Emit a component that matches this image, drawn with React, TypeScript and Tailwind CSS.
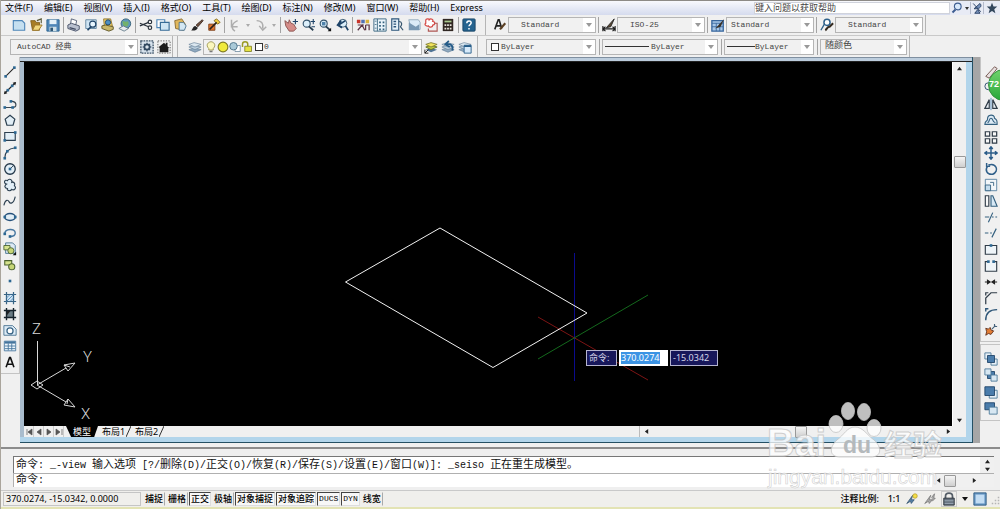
import type { ReactNode } from "react";
import { clsx } from "clsx";

type Tool = { label: string; art: ReactNode };

const NAVY = "#1f4468";
const BLUE = "#4f86b8";
const PALE = "#cfe4f3";
const GOLD = "#d9b13b";
const RED = "#c8352c";

const Glyph = ({ children, className }: { children: ReactNode; className?: string }) => (
  <svg viewBox="0 0 16 16" className={clsx("shrink-0", className ?? "size-3.5")} fill="none">
    {children}
  </svg>
);

const ToolButton = ({ tool }: { tool: Tool }) => (
  <button aria-label={tool.label} className="flex h-4 w-[17px] shrink-0 items-center justify-center">
    <Glyph>{tool.art}</Glyph>
  </button>
);

const Divider = () => (
  <div className="flex h-4 w-1 shrink-0 justify-center">
    <span className="w-px bg-[#a3a3a3]" />
  </div>
);

const Sheets = () => (
  <>
    <path d="M1 11l6-2 8 2-7 3z" fill="#8fa9bf" stroke="#5d7a93" strokeWidth=".7" />
    <path d="M1 8l6-2 8 2-7 3z" fill="#b9cddd" stroke="#5d7a93" strokeWidth=".7" />
    <path d="M1 5l6-2 8 2-7 3z" fill="#dbe7f0" stroke="#5d7a93" strokeWidth=".7" />
  </>
);

const fileTools: Tool[] = [
  { label: "新建", art: <path d="M1.5 3h10l3 3v8h-13z" fill="#c5dff0" stroke={BLUE} strokeWidth="1.3" /> },
  {
    label: "打开",
    art: (
      <>
        <path d="M2 3h5l1 2h4v9H4z" fill="#a87d25" stroke="#80601d" />
        <path d="M4 14l3-6h8l-4 6z" fill="#f1d77c" stroke="#9a762a" />
        <path d="M9 3l5-2v5" stroke="#5a5a3a" strokeWidth="1.3" />
      </>
    ),
  },
  {
    label: "保存",
    art: (
      <>
        <path d="M1 2h14v13H1z" fill={BLUE} stroke="#2b638f" />
        <path d="M4 2h8v5H4z" fill="#e3f0f8" />
        <path d="M4 10h8v5H4z" fill="#cfe0e8" />
        <path d="M5 11h3v4H5z" fill="#2b5576" />
      </>
    ),
  },
];

const printTools: Tool[] = [
  {
    label: "打印",
    art: (
      <>
        <path d="M5 1l6 2-1 5-6-1z" fill="#fff" stroke="#4d5870" />
        <path d="M1 8l4-2 9 3v4l-4 2-9-3z" fill="#b9c0cf" stroke="#414b62" />
        <path d="M3 11l7 2" stroke="#414b62" strokeWidth="1.5" />
      </>
    ),
  },
  {
    label: "打印预览",
    art: (
      <>
        <path d="M2 2h12v10H2z" fill={PALE} stroke="#60839f" />
        <circle cx="10" cy="7" r="3.5" fill="#e8f6ff" stroke={NAVY} strokeWidth="1.3" />
        <path d="M8 10l-4 4" stroke={NAVY} strokeWidth="2" />
      </>
    ),
  },
  {
    label: "发布",
    art: (
      <>
        <path d="M3 1h8l2 8-9 2z" fill="#f4d36b" stroke="#927322" />
        <circle cx="8" cy="5" r="3" fill="#4d8fc2" stroke={NAVY} />
        <path d="M1 9l4-1 9 2v3l-5 2-8-3z" fill="#c9b76a" stroke="#5c5427" />
      </>
    ),
  },
  {
    label: "三维 DWF",
    art: (
      <>
        <circle cx="9" cy="6.5" r="5.5" fill="#5e98bd" stroke="#315d76" />
        <path d="M5 4c2-2 3 1 5 0s3 3 1 5-3-1-5 0z" fill="#73b16c" />
        <path d="M1 12l5-3 6 3-5 3z" fill="#e7ecf0" stroke="#637a88" />
      </>
    ),
  },
];

const editTools: Tool[] = [
  {
    label: "剪切",
    art: (
      <>
        <path d="M1 6l10 4M1 9l10-4" stroke="#28303a" strokeWidth="1.4" />
        <circle cx="12.5" cy="4.5" r="2" stroke="#28303a" strokeWidth="1.3" />
        <circle cx="12.5" cy="11" r="2" stroke="#28303a" strokeWidth="1.3" />
      </>
    ),
  },
  {
    label: "复制",
    art: (
      <>
        <path d="M1 2h9v9H1z" fill="#fff" stroke={BLUE} strokeWidth="1.3" />
        <path d="M5 5h10v9H5z" fill={PALE} stroke="#376b96" strokeWidth="1.3" />
      </>
    ),
  },
  {
    label: "粘贴",
    art: (
      <>
        <path d="M2 3l8-2 4 6-2 7-9-2z" fill="#e0b75b" stroke="#86662c" />
        <path d="M7 5h5l3 4-2 5H7z" fill="#d3e7f3" stroke="#46708f" />
      </>
    ),
  },
  {
    label: "特性匹配",
    art: (
      <>
        <path d="M7 8l7-6 1 1-6 7z" fill="#74513d" stroke="#3a2c26" />
        <path d="M1 14c2 0 2-5 5-5l3 2c-1 3-5 4-8 3z" fill="#242424" />
      </>
    ),
  },
  {
    label: "块编辑器",
    art: (
      <>
        <path d="M2 7h7v7H2z" fill="#e0762e" stroke="#7b3e17" />
        <path d="M8 3l3-2 4 4-3 2z" fill="#efcd42" stroke="#826316" />
        <path d="M3 13l8-8" stroke="#2a2119" strokeWidth="1.7" />
      </>
    ),
  },
];

const undoArt = <path d="M8 15C3 12 4 6 11 3M4 2v8h7" stroke="#adadad" strokeWidth="1.7" />;
const redoArt = <path d="M3 3c6 0 8 4 7 9M6 9l4 5 4-4" stroke="#adadad" strokeWidth="1.7" />;

const Magnifier = () => (
  <>
    <circle cx="6.5" cy="6.5" r="4" fill="#dceffa" stroke="#34546d" strokeWidth="1.3" />
    <path d="M9 9.5l5 4.5" stroke="#263c4e" strokeWidth="2" />
  </>
);

const viewTools: Tool[] = [
  {
    label: "实时平移",
    art: (
      <>
        <path d="M1 3l4 3 1-4 2 4 3 1 3 5-3 3H6L2 9z" fill="#d58c88" stroke="#86504d" />
        <path d="M13 1v6M10 4h6" stroke={NAVY} strokeWidth="1.3" />
      </>
    ),
  },
  { label: "实时缩放", art: <><Magnifier /><path d="M14 1v6M11 4h6M12 10h4" stroke={NAVY} strokeWidth="1.2" /></> },
  { label: "窗口缩放", art: <><Magnifier /><path d="M4.5 4.5h4v4h-4z" fill="#4e82aa" /><path d="M15 11v4h-4z" fill="#111" /></> },
  { label: "缩放上一个", art: <><circle cx="9" cy="6" r="4.5" fill="#dceffa" stroke="#34546d" /><path d="M12 9l3 5M12 3L4 8M7 3L3 8l5 3" stroke={NAVY} strokeWidth="2" /></> },
];

const paletteTools: Tool[] = [
  {
    label: "特性",
    art: (
      <>
        <path d="M1 2h4v4H1z" fill={RED} />
        <path d="M6 2h4v4H6z" fill="#5271b3" />
        <path d="M11 2h4v4h-4z" fill={GOLD} />
        <path d="M2 8h7M2 14l5-6 3 6M11 8v6M11 8h4v6" stroke="#5b3344" strokeWidth="1.4" />
      </>
    ),
  },
  {
    label: "设计中心",
    art: (
      <>
        <path d="M1 1h14v14H1z" fill="#eaf4fa" stroke="#35627d" />
        <path d="M5 1v14" stroke="#35627d" />
        <path d="M7 4h2v2H7zM11 4h2v2h-2zM7 8h2v2H7zM11 8h2v2h-2zM7 12h2v2H7zM11 12h2v2h-2zM2 3h2v1H2zM2 7h2v1H2zM2 11h2v1H2z" fill="#35627d" />
      </>
    ),
  },
  {
    label: "工具选项板",
    art: (
      <>
        <path d="M2 1h8v13H2z" fill="#e5f1f9" stroke="#2c557b" strokeWidth="1.3" />
        <path d="M4 4h3M4 7h3M4 10h3" stroke="#2c557b" strokeWidth="1.5" />
        <path d="M10 4c4 0 4 4 2 6l3 4" stroke="#36556d" strokeWidth="1.4" />
      </>
    ),
  },
  {
    label: "图纸集管理器",
    art: (
      <>
        <path d="M2 2h11l2 3v8H5z" fill="#dcecf7" stroke="#91a8ba" />
        <path d="M2 5l8 5 4-3v7H2z" fill="#7999b3" />
      </>
    ),
  },
  {
    label: "标记集管理器",
    art: (
      <>
        <path d="M2 3c0-3 4-2 4-1 2-2 5 0 4 2 3 0 3 4 0 4 0 3-4 3-5 1-3 1-5-2-3-3z" fill="#fff" stroke="#d54945" strokeWidth="1.4" />
        <path d="M12 6h3v9H5v-3" stroke="#ae5652" strokeWidth="1.3" />
      </>
    ),
  },
  {
    label: "快速计算器",
    art: (
      <>
        <path d="M2 1h12v14H2z" fill="#302722" />
        <path d="M4 3h8v2H4z" fill="#aac98e" />
        <path d="M4 7h2v2H4zM7 7h2v2H7zM10 7h2v2h-2zM4 11h2v2H4zM7 11h2v2H7zM10 11h2v2h-2z" fill="#e7e4dc" />
      </>
    ),
  },
];

const helpTool: Tool = {
  label: "帮助",
  art: (
    <>
      <rect x="1" y="1" width="14" height="14" rx="1" fill="#26648f" stroke="#174263" />
      <path d="M5.5 6c0-3.5 5-3.5 5-.5 0 2-2.5 2-2.5 4M8 11.5v1.5" stroke="#fff" strokeWidth="1.7" />
    </>
  ),
};

const textStyle: Tool = {
  label: "文字样式",
  art: (
    <>
      <path d="M2 13L6 2h1l3 10M4 9h5" stroke="#222" strokeWidth="1.8" />
      <path d="M8 13l6-7" stroke="#5c4024" strokeWidth="2.5" />
    </>
  ),
};
const dimStyle: Tool = {
  label: "标注样式",
  art: (
    <>
      <path d="M1 9v6M15 9v6M1 12.5h14M4 10l-3 2.5L4 15M12 10l3 2.5-3 2.5" stroke="#1c1c1c" strokeWidth="1.3" />
      <path d="M5 11l9-10-4 9z" fill="#5a4832" stroke="#222" />
    </>
  ),
};
const tableStyle: Tool = {
  label: "表格样式",
  art: (
    <>
      <path d="M1 3h13v12H1z" fill="#a7c7e7" stroke="#37669d" strokeWidth="1.5" />
      <path d="M1 6h13M1 10h13M6 6v9M10 6v9" stroke="#37669d" />
      <path d="M5 12L15 1l-4 9z" fill="#3b3228" />
    </>
  ),
};
const leaderStyle: Tool = {
  label: "多重引线样式",
  art: (
    <>
      <circle cx="8" cy="5" r="3.5" fill="#fff" stroke="#2e618b" strokeWidth="1.7" />
      <path d="M5 7l-4 7" stroke="#2e618b" strokeWidth="1.5" />
      <path d="M6 14c2-1 2-4 5-4l4-4" stroke="#33291f" strokeWidth="2.3" />
    </>
  ),
};

const workspaceTools: Tool[] = [
  {
    label: "工作空间设置",
    art: (
      <>
        <path d="M1 1h14v14H1z" fill="#d7e2ec" stroke="#3c5268" strokeDasharray="2 1" strokeWidth="1.5" />
        <circle cx="8" cy="8" r="3" stroke="#324961" strokeWidth="2" />
        <path d="M8 3v2M8 11v2M3 8h2M11 8h2M4.5 4.5L6 6M10 10l1.5 1.5M11.5 4.5L10 6M6 10l-1.5 1.5" stroke="#324961" strokeWidth="1.3" />
      </>
    ),
  },
  {
    label: "我的工作空间",
    art: (
      <>
        <path d="M1 1h14v14H1z" stroke="#555" strokeDasharray="1.5 1.5" />
        <path d="M2 8l6-5 2 2V3h2v4l2 2h-1v5H3V9z" fill="#1d1d1d" />
      </>
    ),
  },
];

const layerManager: Tool = { label: "图层特性管理器", art: <Sheets /> };
const layerTools: Tool[] = [
  {
    label: "将对象的图层置为当前",
    art: (
      <>
        <path d="M2 11l6-2 7 2-7 3z" fill="#4f7394" />
        <path d="M2 8l6-2 7 2-7 3z" fill="#b7c83c" stroke="#626d25" />
        <path d="M2 5l6-2 7 2-7 3z" fill="#f0e25c" stroke="#807d2c" />
        <path d="M1 11v4h4M1 15l4-4" stroke="#111" />
      </>
    ),
  },
  { label: "上一个图层", art: <><Sheets /><path d="M13 12c1-6-2-8-6-7M9 1L5 5l5 3" stroke="#235a87" strokeWidth="2" /></> },
  { label: "图层状态管理器", art: <><Sheets /><path d="M7 6h8v9H7z" fill="#d7eafa" stroke="#235a87" /><path d="M7 7h8" stroke="#235a87" strokeWidth="2" /></> },
];

const dots = (...points: [number, number][]) =>
  points.map(([x, y]) => <rect key={`${x}-${y}`} x={x - 1.5} y={y - 1.5} width="3" height="3" fill="#2c6792" />);

const drawTools: Tool[] = [
  { label: "直线", art: <><path d="M3 13L13 3" stroke="#222" strokeWidth="1.3" />{dots([3, 13], [13, 3])}</> },
  { label: "构造线", art: <><path d="M2 14L14 2" stroke="#222" strokeWidth="1.3" /><path d="M1 15l1-4 3 3zM15 1l-4 1 3 3z" fill="#222" />{dots([5.5, 10.5], [10.5, 5.5])}</> },
  { label: "多段线", art: <><path d="M2 12h9c5 0 5-6 0-7H9" stroke="#3a4650" strokeWidth="1.3" />{dots([2, 12], [11, 12], [9, 5])}</> },
  { label: "正多边形", art: <path d="M8 2.5l5.5 4.5-2 7h-7l-2-7z" fill="#e2eef6" stroke="#2b3f50" strokeWidth="1.4" /> },
  { label: "矩形", art: <><path d="M2 4h12v9H2z" fill="#e2eef6" stroke="#2b3f50" strokeWidth="1.3" />{dots([2, 13], [14, 4])}</> },
  { label: "圆弧", art: <><path d="M2 14C2 7 6 3 14 2" stroke="#2b3f50" strokeWidth="1.3" />{dots([2, 14], [5, 6], [14, 2])}</> },
  { label: "圆", art: <><circle cx="8" cy="8" r="6" fill="#e2eef6" stroke="#24384a" strokeWidth="1.5" /><path d="M8 8l4-4" stroke="#24384a" />{dots([8, 8])}</> },
  { label: "修订云线", art: <path d="M4 7C0 6 2 1 5 3c2-3 6-1 5 2 3-1 4 2 3 4 3 2 0 6-3 4-2 3-6 1-5-1-3 0-4-3-1-5z" fill="#e2eef6" stroke="#2b3f50" strokeWidth="1.3" /> },
  { label: "样条曲线", art: <path d="M1 13c2-8 5-6 6-4s5 3 7-6" stroke="#2b3f50" strokeWidth="1.3" /> },
  { label: "椭圆", art: <><ellipse cx="8" cy="8" rx="6" ry="4" fill="#e2eef6" stroke="#24507a" strokeWidth="1.7" />{dots([2, 8], [14, 8])}</> },
  { label: "椭圆弧", art: <><path d="M2 9c0-6 12-7 12-1 0 3-3 4-6 4" stroke="#4777a0" strokeWidth="1.6" />{dots([8, 12], [2, 9])}</> },
  { label: "插入块", art: <><path d="M3 1h8l3 3v9H3z" fill="#dce9f3" stroke="#44718f" /><path d="M1 4h7v5H1z" fill="#d6e48e" stroke="#4c6330" /><circle cx="9" cy="10" r="3.5" fill="#c7d676" stroke="#4c6330" /><path d="M15 11v4h-4z" fill="#111" /></> },
  { label: "创建块", art: <><path d="M2 3h8v5H2z" fill="#d6e48e" stroke="#4c6330" strokeWidth="1.2" /><circle cx="10" cy="10" r="3.5" fill="#c7d676" stroke="#4c6330" strokeWidth="1.2" /></> },
  { label: "点", art: dots([8, 8]) },
  { label: "图案填充", art: <><path d="M3 3h10v10H3z" fill="#cfe4f3" /><path d="M4 1v14M12 1v14M1 4h14M1 12h14" stroke="#376384" strokeWidth="1.4" /><path d="M4 8l4-4M4 12l8-8M8 12l4-4" stroke={BLUE} /></> },
  { label: "渐变色", art: <><path d="M4 4h8v8H4z" fill="#6b7c84" /><path d="M4 4h5L4 10z" fill="#222" /><path d="M4 1v14M12 1v14M1 4h14M1 12h14" stroke="#17232c" strokeWidth="1.6" /></> },
  { label: "面域", art: <><path d="M1 3h10l4 4v7H1z" fill="#dceaf5" stroke="#47718f" /><circle cx="8" cy="9" r="3.5" fill="#fff" stroke="#376384" strokeWidth="1.4" /></> },
  { label: "表格", art: <><path d="M1.5 2.5h13v11h-13z" fill="#eef6fc" stroke="#44749c" /><path d="M2 4h12" stroke="#44749c" strokeWidth="2.5" /><path d="M2 8h12M2 11h12M6 5v8M10 5v8" stroke="#44749c" /></> },
  { label: "多行文字", art: <path d="M3.5 14L7.5 3h1l4 11M5 10.5h6" stroke="#111" strokeWidth="1.8" /> },
];

const modifyTools: Tool[] = [
  { label: "删除", art: <path d="M2 13L12 2l3 2-9 11z" fill="#e8e0e0" stroke="#6b4d46" /> },
  { label: "复制对象", art: <><circle cx="5" cy="6" r="4" stroke={NAVY} /><circle cx="11" cy="10" r="4" fill={PALE} stroke={NAVY} /></> },
  { label: "镜像", art: <><path d="M6 3v10H1zM10 3v10h5z" fill="#e8eef3" stroke="#303c48" strokeWidth="1.3" /><path d="M8 1v14" stroke={BLUE} /></> },
  { label: "偏移", art: <><path d="M1 13c0-5 3-3 3-6 0-6 8-6 8-1 3 2 3 3 3 7z" fill="#dceaf5" stroke="#34607f" strokeWidth="1.3" /><path d="M4 11c3 0 1-5 4-5s1 5 5 5" stroke="#34607f" strokeWidth="1.3" /></> },
  { label: "阵列", art: <path d="M1.500 2h5v5h-5zM9.500 2h5v5h-5zM1.500 10h5v5h-5zM9.500 10h5v5h-5z" fill="#f8f8f8" stroke="#303c48" strokeWidth="1.4" /> },
  { label: "移动", art: <path d="M8 1v14M1 8h14M6 3.5L8 1l2 2.5M6 12.5L8 15l2-2.5M3.5 6L1 8l2.500 2M12.500 6L15 8l-2.500 2" stroke="#2b5c88" strokeWidth="1.7" /> },
  { label: "旋转", art: <path d="M5 3.5c9-3 13 7 5 10.500-7 1-9-5-6-9M3 1v4h4" stroke="#2f5f89" strokeWidth="1.7" /> },
  { label: "缩放", art: <><path d="M1.5 1.5h13v13h-13z" fill="#f2f6f9" stroke="#547e9e" /><path d="M1.5 8h6v6.500h-6z" fill="#c4dced" stroke="#34607f" /><path d="M7 5h4v4" stroke="#34607f" /></> },
  { label: "拉伸", art: <><path d="M1.5 2h4v12h-4z" fill="#f8f8f8" stroke="#303c48" strokeWidth="1.3" /><path d="M8 2h2l5 12H8z" fill="#d6e8f5" stroke="#34607f" strokeWidth="1.3" /></> },
  { label: "修剪", art: <path d="M1 8h5M9 8h2M13 8h2M5 14l5-11" stroke="#34607f" strokeWidth="1.3" /> },
  { label: "延伸", art: <path d="M1 8h4M7 8h2M9 13l5-10" stroke="#34607f" strokeWidth="1.3" /> },
  { label: "打断于点", art: <><path d="M1.5 4h13v10h-13z" fill="#eef4f8" stroke="#303c48" strokeWidth="1.3" />{dots([8, 4])}</> },
  { label: "打断", art: <><path d="M5 3H1.5v11h13V3H11" fill="#eef4f8" stroke="#303c48" strokeWidth="1.3" />{dots([5, 3], [11, 3])}</> },
  { label: "合并", art: <path d="M1 8h4M15 8h-4M4 6l3 2-3 2zM12 6L9 8l3 2z" fill="#222" stroke="#222" strokeWidth="1.3" /> },
  { label: "倒角", art: <path d="M2 15V8l6-6h7M2 5V2h3" stroke="#303c48" strokeWidth="1.4" /> },
  { label: "圆角", art: <path d="M2 15C2 7 6 3 15 3M2 5V2h3" stroke="#2d5577" strokeWidth="1.6" /> },
  { label: "分解", art: <><path d="M2 6l3 1 2-2 1 3 3 1-3 4-3-1-3 2 1-4z" fill="#e27d35" stroke="#5e2f1c" /><path d="M9 7l4-4M12 1v3h3" stroke="#44617a" strokeWidth="1.3" /></> },
];

const orderTools: Tool[] = [
  { label: "前置", art: <><path d="M1 1h7v7H1zM8 8h7v7H8z" fill="#e7f0f7" stroke="#4b7898" /><path d="M4 4h8v8H4z" fill="#4a7cab" stroke="#1f4468" /></> },
  { label: "后置", art: <><path d="M4 4h8v8H4z" fill="#4a7cab" stroke="#1f4468" /><path d="M1 1h7v7H1zM8 8h7v7H8z" fill="#d7e7f2" stroke="#4b7898" /></> },
  { label: "置于对象之上", art: <><path d="M6 6h9v9H6z" fill="#e7f0f7" stroke="#4b7898" /><path d="M1 2h11v10H1z" fill="#4a7cab" stroke="#1f4468" /></> },
  { label: "置于对象之下", art: <><path d="M1 2h11v8H1z" fill="#4a7cab" stroke="#1f4468" /><path d="M6 7h9v8H6z" fill="#d7e7f2" stroke="#4b7898" /></> },
];

const menus = ["文件(F)", "编辑(E)", "视图(V)", "插入(I)", "格式(O)", "工具(T)", "绘图(D)", "标注(N)", "修改(M)", "窗口(W)", "帮助(H)", "Express"];

const toggles = [
  { label: "捕捉", on: false },
  { label: "栅格", on: false },
  { label: "正交", on: true },
  { label: "极轴", on: false },
  { label: "对象捕捉", on: true },
  { label: "对象追踪", on: true },
  { label: "DUCS", on: true },
  { label: "DYN", on: true },
  { label: "线宽", on: false },
];

type ComboProps = { label: string; value: string; className: string; textClass?: string; children?: ReactNode };

const Combo = ({ label, value, className, textClass, children }: ComboProps) => (
  <div className={clsx("relative h-4 shrink-0 border border-[#b5b5b5] bg-[#f1f1f1]", className)}>
    <select
      aria-label={label}
      defaultValue={value}
      className={clsx(
        "block h-full w-full appearance-none bg-transparent font-['Liberation_Mono','Noto_Sans_CJK_SC',monospace] text-[#444] outline-none",
        textClass ?? "pl-3 text-[8px]"
      )}
    >
      <option>{value}</option>
    </select>
    <span className="pointer-events-none absolute inset-y-0 right-0 flex w-3 items-center justify-center bg-white">
      <svg viewBox="0 0 6 4" className="h-1 w-1.5"><path d="M0 0h6L3 4z" fill="#999" /></svg>
    </span>
    {children && <span className="pointer-events-none absolute inset-y-0 left-0 flex items-center">{children}</span>}
  </div>
);

const Arrow = ({ dir, label }: { dir: "up" | "down" | "left" | "right"; label: string }) => (
  <button aria-label={label} className="flex size-3 shrink-0 items-center justify-center">
    <svg
      viewBox="0 0 6 6"
      className={clsx("size-[5px]", dir === "down" && "rotate-180", dir === "left" && "-rotate-90", dir === "right" && "rotate-90")}
    >
      <path d="M0 5h6L3 1z" fill="#222" />
    </svg>
  </button>
);

const Thumb = () => <div className="size-3 shrink-0 rounded-[1px] border border-[#999] bg-linear-to-b from-[#f5f5f5] to-[#cfcfcf]" />;

// Chinese glyphs are set one size above the monospaced Latin
const CommandText = ({ text }: { text: string }) => (
  <>
    {text.split(/([\u3000-\u9fff]+)/).map((part, i) =>
      i % 2 ? <span key={i} className="text-[11px]">{part}</span> : part
    )}
  </>
);

const MenuBar = () => (
  <header className="flex h-[15px] items-stretch border-t border-[#8d8a86] bg-linear-to-b from-[#f8f9fd] to-[#d5dbee]">
    <nav className="flex flex-1 items-center gap-[11px] pl-1 text-[9px] leading-3 text-black">
      {menus.map((menu) => (
        <button key={menu} className="whitespace-nowrap">{menu}</button>
      ))}
    </nav>
    <input
      aria-label="帮助搜索"
      placeholder="键入问题以获取帮助"
      className="my-px w-[196px] border border-[#d0d3dc] bg-white text-[9px] leading-3 outline-none placeholder:text-[#444]"
    />
    <div className="flex w-[50px] items-center justify-between bg-[#e8ebf5] pr-0.5 pl-px">
      <button aria-label="搜索">
        <Glyph className="size-3">
          <circle cx="9" cy="6" r="4.5" fill="#d8e8fb" stroke="#3d5d91" strokeWidth="1.5" />
          <path d="M6 10l-4 4" stroke="#3d5d91" strokeWidth="2.5" />
        </Glyph>
      </button>
      <button aria-label="搜索选项">
        <svg viewBox="0 0 4 3" className="h-[3px] w-1"><path d="M0 0h4L2 3z" fill="#333" /></svg>
      </button>
      <button aria-label="通讯中心" className="border-x border-[#b5bbcc]">
        <Glyph className="size-3">
          <path d="M3 2l10 11M8 9c6-1 6-5 4-7L4 9zM5 15h7l-3-5z" fill="#7792bd" stroke="#2d4468" strokeWidth="1.3" />
        </Glyph>
      </button>
      <button aria-label="收藏夹">
        <Glyph className="size-3"><path d="M8 1l2 5h5l-4 3.5 1.5 5.5L8 12l-4.5 3L5 9.5 1 6h5z" fill="#33475d" /></Glyph>
      </button>
    </div>
  </header>
);

const HistoryDrop = ({ label }: { label: string }) => (
  <button aria-label={label} className="flex h-4 w-[9px] shrink-0 items-center justify-center">
    <svg viewBox="0 0 4 3" className="h-[3px] w-1"><path d="M0 0h4L2 3z" fill="#aaa" /></svg>
  </button>
);

const StandardBar = () => (
  <div className="flex h-[21px] items-center border-b border-[#c9c9c9] pl-[9px]">
    {fileTools.map((t) => <ToolButton key={t.label} tool={t} />)}
    <Divider />
    {printTools.map((t) => <ToolButton key={t.label} tool={t} />)}
    <Divider />
    {editTools.map((t) => <ToolButton key={t.label} tool={t} />)}
    <Divider />
    <ToolButton tool={{ label: "放弃", art: undoArt }} />
    <HistoryDrop label="放弃列表" />
    <ToolButton tool={{ label: "重做", art: redoArt }} />
    <HistoryDrop label="重做列表" />
    <Divider />
    {viewTools.map((t) => <ToolButton key={t.label} tool={t} />)}
    <Divider />
    {paletteTools.map((t) => <ToolButton key={t.label} tool={t} />)}
    <Divider />
    <ToolButton tool={helpTool} />
    <div className="ml-2 flex h-full items-center border-x border-[#b5b5b5] pr-0.5 pl-[5px]">
      <ToolButton tool={textStyle} />
      <Combo label="文字样式控制" value="Standard" className="w-[88px]" />
      <Divider />
      <ToolButton tool={dimStyle} />
      <Combo label="标注样式控制" value="ISO-25" className="w-[88px]" />
      <Divider />
      <ToolButton tool={tableStyle} />
      <Combo label="表格样式控制" value="Standard" className="w-[88px]" textClass="pl-1 text-[8px]" />
      <Divider />
      <ToolButton tool={leaderStyle} />
      <Combo label="引线样式控制" value="Standard" className="w-[88px]" />
    </div>
  </div>
);

const LayerBar = () => (
  <div className="flex h-[21px] items-center pl-[9px]">
    <div className="flex h-full items-center border-r border-[#b5b5b5]">
      <Combo label="工作空间" value="AutoCAD 经典" className="w-32" textClass="pl-1.5 text-[8px]" />
      {workspaceTools.map((t) => <ToolButton key={t.label} tool={t} />)}
    </div>
    <div className="ml-1 flex h-full items-center border-x border-[#b5b5b5] pr-1 pl-2">
      <ToolButton tool={layerManager} />
      <Combo label="图层" value="0" className="w-[219px]" textClass="pl-[60px] text-[8px]">
        <span className="flex items-center pl-px">
          <Glyph className="size-3">
            <path d="M5 10C0 5 5 1 8 1s8 4 3 9v2H5z" fill="#fbf7bd" stroke="#8c8438" />
            <path d="M6 13h4v2H6z" fill="#777" />
          </Glyph>
          <Glyph className="size-3"><circle cx="8" cy="8" r="6.5" fill="#f0ea3c" stroke="#807b21" strokeWidth="1.5" /></Glyph>
          <Glyph className="size-3">
            <path d="M8 6h7v8H8z" fill="#fff" stroke="#65839a" />
            <circle cx="6" cy="7" r="5" fill="#a9c9d8" stroke="#54788e" strokeWidth="1.3" />
          </Glyph>
          <Glyph className="size-3">
            <path d="M2 8V4c0-4 7-4 7 0v3" stroke="#9a9b24" strokeWidth="2" />
            <path d="M5 7h9v7H5z" fill="#e6e343" stroke="#75751d" />
          </Glyph>
          <span className="ml-0.5 size-2 border border-[#333] bg-white" />
        </span>
      </Combo>
      {layerTools.map((t) => <ToolButton key={t.label} tool={t} />)}
    </div>
    <div className="ml-1 flex h-full items-center gap-px border-r border-[#b5b5b5] pr-0.5 pl-1">
      <Combo label="颜色" value="ByLayer" className="w-[110px]" textClass="pl-3.5 text-[8px]">
        <span className="ml-1 size-2 border border-[#333] bg-white" />
      </Combo>
      <Divider />
      <Combo label="线型" value="ByLayer" className="w-[116px]" textClass="pl-12 text-[8px]">
        <span className="ml-0.5 h-px w-11 bg-[#333]" />
      </Combo>
      <Divider />
      <Combo label="线宽控制" value="ByLayer" className="w-[90px]" textClass="pl-[30px] text-[8px]">
        <span className="ml-0.5 h-px w-7 bg-[#333]" />
      </Combo>
      <Divider />
      <Combo label="打印样式" value="随颜色" className="w-[87px]" textClass="pl-1 text-[9px]" />
    </div>
  </div>
);

const Drawing = () => (
  <div className="relative min-w-0 flex-1 overflow-hidden bg-black">
    <svg className="absolute inset-0 h-full w-full" fill="none">
      <g transform="translate(-24 -62)">
        <path d="M574.5 253v128" stroke="#0b0b8c" />
        <path d="M538 317l110 63" stroke="#7c1414" />
        <path d="M538 359l110-64" stroke="#14691d" />
        <path d="M345.5 282L440 228l147 85-94 54.5z" stroke="#f2f2f2" />
        <g stroke="#d8d8d8">
          <path d="M37.5 341v44M37 385l29-17M37 385l29 17" />
          <path d="M31 385l6-4 6 4-6 4z" />
          <path d="M75 363l-11 2 4 6zM75 407l-7-8-4 6z" />
          <path d="M64 365l6 2M68 399l-1 5" />
        </g>
        <g fill="#d8d8d8" fontFamily="Roboto, sans-serif" fontWeight="300" fontSize="15">
          <text x="32" y="334">Z</text>
          <text x="83" y="362">Y</text>
          <text x="81" y="419">X</text>
        </g>
      </g>
    </svg>
    <div className="absolute top-[288px] left-[562px] flex h-4 gap-0.5 text-[9px] text-[#d5d5e8]">
      <label htmlFor="coord-x" className="flex w-[31px] items-center border border-[#b4b4cf] bg-[#17175a] pl-0.5">命令:</label>
      <div className="flex w-[49px] items-center bg-white pl-0.5">
        <input id="coord-x" defaultValue="370.0274" className="h-3 w-[39px] bg-[#3c93e4] text-white outline-none" />
      </div>
      <input aria-label="Y" defaultValue="-15.0342" className="w-12 border border-[#b4b4cf] bg-[#17175a] pl-0.5 outline-none" />
    </div>
  </div>
);

const LayoutTabs = () => (
  <div className="flex h-[11px] items-stretch bg-[#f0f0f0] text-[9px] leading-[11px] text-black">
    <div className="flex w-[42px]">
      {[
        { label: "第一个", d: "M2 1v6M7 1L3 4l4 3z" },
        { label: "上一个", d: "M6 1L2 4l4 3z" },
        { label: "下一个", d: "M2 1l4 3-4 3z" },
        { label: "最后一个", d: "M1 1l4 3-4 3zM7 1v6" },
      ].map((nav) => (
        <button key={nav.label} aria-label={nav.label} className="flex w-2.5 items-center justify-center border-r border-[#ccc]">
          <svg viewBox="0 0 8 8" className="size-2"><path d={nav.d} fill="#555" stroke="#555" strokeWidth=".7" /></svg>
        </button>
      ))}
    </div>
    <button className="w-8 bg-black text-white [clip-path:polygon(0_0,100%_0,88%_100%,16%_100%)]">模型</button>
    {["布局1", "布局2"].map((name) => (
      <button key={name} className="flex w-[33px] items-center justify-between pl-1 whitespace-nowrap">
        {name}
        <svg viewBox="0 0 5 11" className="h-[11px] w-[5px]"><path d="M0 11L5 0" stroke="#333" /></svg>
      </button>
    ))}
    <div className="flex-1" />
    <div className="flex w-[315px] items-center justify-between border-l border-[#bbb]">
      <Arrow dir="left" label="向左滚动" />
      <div className="flex flex-1 justify-center pl-2"><Thumb /></div>
      <Arrow dir="right" label="向右滚动" />
    </div>
    <div className="w-3" />
  </div>
);

const DrawingWindow = () => (
  <div className="flex min-w-0 flex-1 flex-col border-r border-b border-[#245064] bg-[#b2d5eb]">
    <div className="h-[5px] border-t border-[#7f8fa0] border-b border-b-[#222] bg-[#bccddd]" />
    <div className="mr-1.5 mb-[5px] flex flex-1 flex-col border-l-4 border-[#a9bccd]">
      <div className="flex flex-1">
        <Drawing />
        <div className="flex w-[14px] flex-col items-center border-l border-white bg-[#f0f0f0]">
          <Arrow dir="up" label="向上滚动" />
          <div className="flex-1" />
          <Thumb />
          <div className="flex-[3]" />
          <Arrow dir="down" label="向下滚动" />
        </div>
      </div>
      <LayoutTabs />
    </div>
  </div>
);

const CommandWindow = () => (
  <section className="border-t-2 border-[#8c8c8c] bg-[#efefef] pt-[7px] pr-1.5 pb-[3px] pl-3 font-['Liberation_Mono','Noto_Sans_CJK_SC',monospace] text-[10px] leading-4 text-[#111]">
    <div className="flex h-[17px] border-t border-l border-[#777] bg-white">
      <p className="flex-1 overflow-hidden pl-0.5 whitespace-pre">
        <CommandText text="命令: _-view 输入选项 [?/删除(D)/正交(O)/恢复(R)/保存(S)/设置(E)/窗口(W)]: _seiso 正在重生成模型。" />
      </p>
      <div className="flex w-[14px] flex-col items-center justify-center bg-[#f0f0f0]">
        <div className="flex h-2 items-center"><Arrow dir="up" label="上一行" /></div>
        <div className="flex h-2 items-center"><Arrow dir="down" label="下一行" /></div>
      </div>
    </div>
    <div className="flex h-[14px] items-center border-t border-l border-[#b0b0b0] bg-white">
      <label htmlFor="command" className="pl-0.5"><CommandText text="命令:" /></label>
      <input id="command" className="min-w-0 flex-1 bg-transparent pl-1 outline-none" />
      <div className="flex h-full w-[48px] items-center bg-[#f0f0f0]">
        <Arrow dir="left" label="命令行向左" />
        <Thumb />
        <div className="flex-1" />
        <Arrow dir="right" label="命令行向右" />
      </div>
      <div className="h-full w-[14px] bg-[#f0f0f0]" />
    </div>
  </section>
);

const StatusBar = () => (
  <footer className="flex h-[19px] items-center border-t border-b-2 border-[#c9c9c9] border-b-[#e3e3b4] bg-[#f0efec] pl-0.5 text-[9px] text-black">
    <output className="flex h-[14px] w-[138px] items-center border border-[#c5c5c5] pl-0.5 font-['Noto_Sans',sans-serif]">
      370.0274, -15.0342, 0.0000
    </output>
    <div className="flex h-[14px] gap-px pl-0.5 font-medium">
      {toggles.map(({ label, on }) => (
        <button
          key={label}
          aria-pressed={on}
          className={clsx(
            "border px-px leading-3 whitespace-nowrap",
            /[A-Z]/.test(label) && "font-['Liberation_Mono',monospace] text-[8px]",
            on ? "border-[#444] border-r-[#ddd] border-b-[#ddd] bg-[#f7f7f7]" : "border-transparent border-r-[#aaa]"
          )}
        >
          {label}
        </button>
      ))}
    </div>
    <div className="flex flex-1 items-center justify-end">
      <span className="font-medium">注释比例:</span>
      <button className="ml-1.5 w-[18px] font-medium">1:1</button>
      <button aria-label="注释可见性" className="w-[18px]">
        <Glyph className="mx-auto size-3">
          <path d="M1 14L9 3l-2 6h4l-4 5-1-3z" fill="#5580a8" stroke="#35546f" />
          <circle cx="12" cy="4" r="3" fill="#f3df49" stroke="#b89c28" />
        </Glyph>
      </button>
      <button aria-label="自动添加比例" className="w-[18px]">
        <Glyph className="mx-auto size-3"><path d="M1 14L9 3l-2 6h4l-4 5-1-3zM10 6l4-5-1 6h2l-4 4" fill="#aaa" stroke="#777" /></Glyph>
      </button>
      <button aria-label="锁定" className="ml-0.5 flex w-4 justify-center border border-[#ccc]">
        <Glyph>
          <path d="M4 8V5c0-5 8-5 8 0v3" stroke="#555e68" strokeWidth="2" />
          <path d="M2 7h12v8H2z" fill="#66717e" stroke="#2b333c" />
          <path d="M3 10h10M3 13h10" stroke="#9eabb8" />
        </Glyph>
      </button>
      <button aria-label="状态栏菜单" className="flex w-4 justify-center">
        <svg viewBox="0 0 6 4" className="h-1 w-1.5"><path d="M0 0h6L3 4z" fill="#111" /></svg>
      </button>
      <button aria-label="全屏显示">
        <Glyph>
          <path d="M1 1h14v14H1z" fill="#6d9cc8" stroke="#24527c" />
          <path d="M3 3h10v10H3z" fill="#c3ddf3" />
        </Glyph>
      </button>
      <Glyph className="ml-px size-3"><path d="M13 5h2v2h-2zM9 9h2v2H9zM13 9h2v2h-2zM5 13h2v2H5zM9 13h2v2H9zM13 13h2v2h-2z" fill="#b5b5b5" /></Glyph>
    </div>
  </footer>
);

const Watermark = () => (
  <svg viewBox="0 0 184 92" className="pointer-events-none absolute right-[52px] bottom-[18px] h-[92px] w-[184px]">
    <g fill="#fff" fillOpacity=".75" stroke="#c4c4c4" strokeOpacity=".8" strokeWidth="1">
      <ellipse cx="72" cy="25" rx="7" ry="8.5" />
      <ellipse cx="84" cy="12" rx="6.5" ry="8.5" />
      <ellipse cx="100" cy="13" rx="6.5" ry="8.5" />
      <ellipse cx="110" cy="29" rx="7" ry="8.5" />
      <path d="M91 28c8 0 12 8 19 13 8 7 8 17-3 17H76c-11 0-11-10-3-17 7-5 10-13 18-13z" />
      <text x="3" y="57" fontSize="38" fontWeight="700" fontFamily="Liberation Sans, Arial, sans-serif">Bai</text>
      <text x="120" y="57" fontSize="29" fontWeight="700" fontFamily="Noto Sans CJK SC, sans-serif">经验</text>
      <text x="4" y="85" fontSize="21" strokeWidth=".6" fontFamily="Liberation Sans, Arial, sans-serif">jingyan.baidu.com</text>
    </g>
    <text x="79" y="54" fontSize="23" fontWeight="700" fill="#b4b9bc" fontFamily="Liberation Sans, Arial, sans-serif">du</text>
  </svg>
);

const App = () => {
  return (
    <div className="relative flex min-h-screen flex-col overflow-hidden border-l border-[#aaa59c] bg-[#f0f0f0] font-['Noto_Sans','Noto_Sans_CJK_SC',sans-serif] text-black select-none">
      <MenuBar />
      <StandardBar />
      <LayerBar />
      <main className="mb-1 flex flex-1">
        <aside className="w-[19px] shrink-0">
          <div className="flex h-[317px] flex-col justify-between border-r border-b border-[#c4c4c4] pt-[7px] pb-[3px]">
            {drawTools.map((t) => <ToolButton key={t.label} tool={t} />)}
          </div>
        </aside>
        <DrawingWindow />
        <div className="w-[7px] bg-[#a6a6a6]" />
        <aside className="w-5 shrink-0">
          <div className="flex h-[285px] flex-col items-center justify-between border-b border-l border-[#c4c4c4] pt-[7px] pb-[3px]">
            {modifyTools.map((t) => <ToolButton key={t.label} tool={t} />)}
          </div>
          <div className="mt-0.5 flex h-[77px] flex-col items-center justify-between border border-r-0 border-[#c4c4c4] pt-1.5 pb-1">
            {orderTools.map((t) => <ToolButton key={t.label} tool={t} />)}
          </div>
        </aside>
      </main>
      <CommandWindow />
      <StatusBar />
      <Watermark />
      <div className="absolute top-[69px] -right-5 flex size-8 items-center rounded-full border border-[#36913e] bg-linear-to-b from-[#6fd36c] to-[#24a83b] font-['Liberation_Sans',sans-serif] text-[9px] font-bold text-white">
        72
      </div>
    </div>
  );
};

export default App;
